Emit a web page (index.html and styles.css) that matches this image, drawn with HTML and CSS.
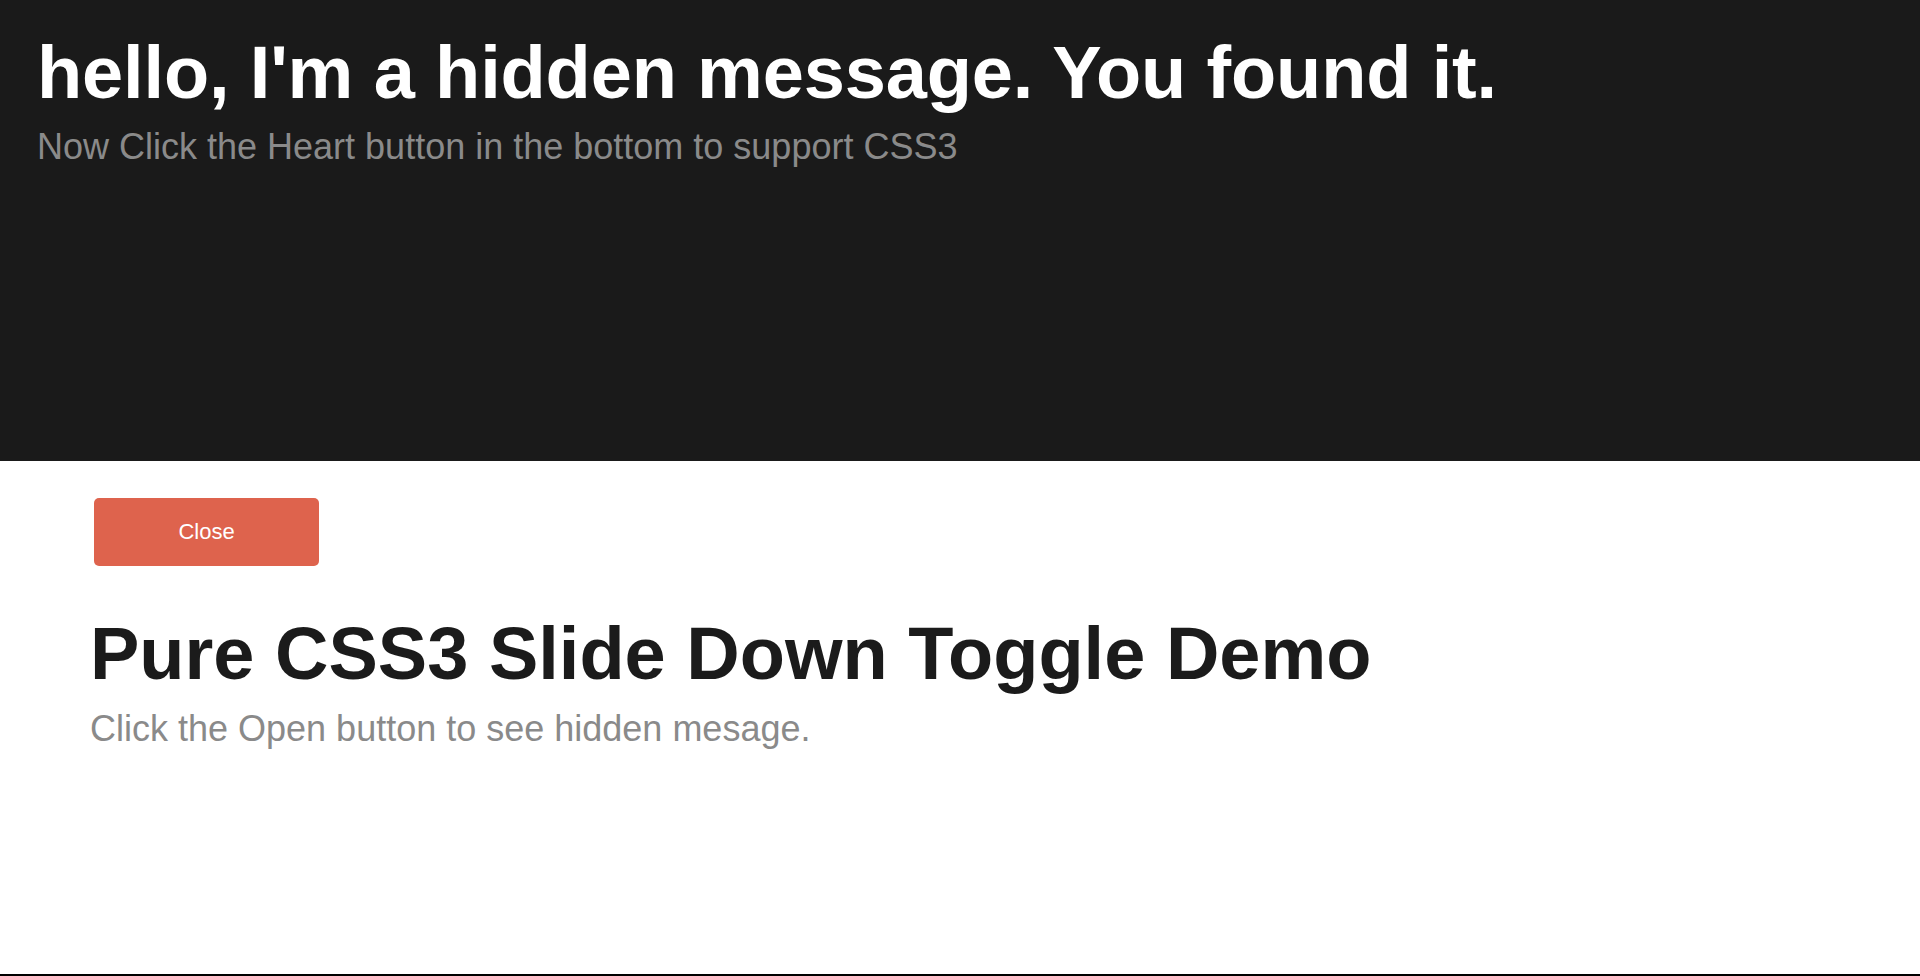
FILE: index.html
```html
<!DOCTYPE html>
<html lang="en">
<head>
<meta charset="utf-8">
<title>Pure CSS3 Slide Down Toggle Demo</title>
<link rel="stylesheet" href="styles.css">
</head>
<body>
<div class="page">
  <section class="hidden-panel">
    <h1 class="hidden-title">hello, I'm a hidden message. You found it.</h1>
    <p class="hidden-sub">Now Click the Heart button in the bottom to support CSS3</p>
  </section>
  <main class="content">
    <button class="toggle-btn" type="button">Close</button>
    <h1 class="demo-title">Pure CSS3 Slide Down Toggle Demo</h1>
    <p class="demo-sub">Click the Open button to see hidden mesage.</p>
  </main>
  <footer class="bottom-bar"></footer>
</div>
</body>
</html>
```
FILE: styles.css
```css
html, body {
  margin: 0;
  padding: 0;
  background: #ffffff;
}

body {
  font-family: "Liberation Sans", Arial, sans-serif;
}

.page {
  display: flex;
  flex-direction: column;
  min-height: 100vh;
  box-sizing: border-box;
}

.hidden-panel {
  background: #1a1a1a;
  height: 461px;
  box-sizing: border-box;
  padding: 36px 0 0 37px;
}

.hidden-title {
  margin: 0;
  font-size: 74px;
  line-height: 74px;
  font-weight: bold;
  letter-spacing: -0.15px;
  color: #ffffff;
}

.hidden-sub {
  margin: 19px 0 0 0;
  font-size: 36px;
  line-height: 36px;
  color: #8a8a8a;
}

.content {
  flex: 1;
  padding: 37px 0 0 90px;
}

.toggle-btn {
  display: block;
  margin: 0 0 0 4px;
  width: 225px;
  height: 68px;
  border: none;
  border-radius: 5px;
  background: #de634d;
  color: #ffffff;
  font-family: "Liberation Sans", Arial, sans-serif;
  font-size: 22px;
  padding: 0;
  cursor: pointer;
}

.demo-title {
  margin: 51px 0 0 0;
  font-size: 74px;
  line-height: 74px;
  font-weight: bold;
  color: #1b1b1b;
}

.demo-sub {
  margin: 20px 0 0 0;
  font-size: 36px;
  line-height: 36px;
  color: #8a8a8a;
}

.bottom-bar {
  height: 2px;
  background: #000000;
}
```
